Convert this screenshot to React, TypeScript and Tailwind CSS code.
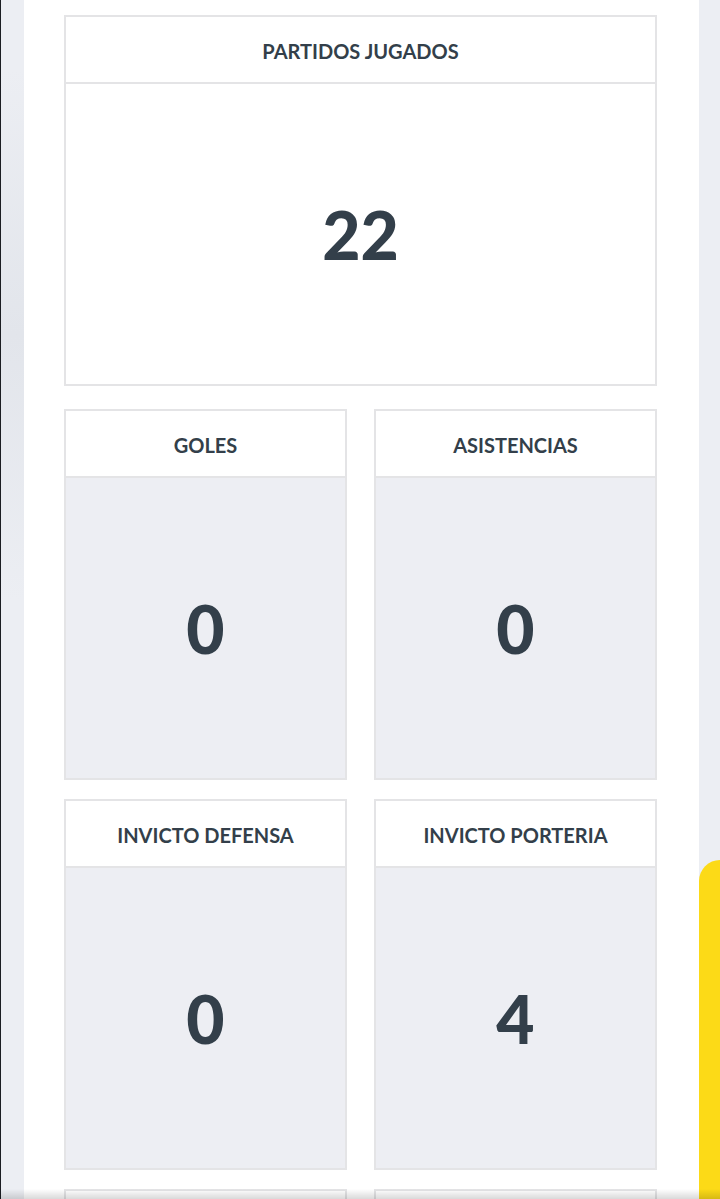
import React from "react";

const font = { fontFamily: "Lato, 'Noto Sans', sans-serif" };

function Card({ title, value, big = false }: { title: string; value: string; big?: boolean }) {
  return (
    <div className="flex h-[371px] flex-col border-2 border-[#e4e4e6]">
      <div className="flex h-[67px] shrink-0 items-center justify-center border-b-2 border-[#e4e4e6] bg-white pt-[2px] text-[20px] font-bold text-[#333f4a]">
        {title}
      </div>
      <div
        className={
          big
            ? "flex flex-1 items-center justify-center bg-white text-[66px] font-black text-[#333f4a]"
            : "flex flex-1 items-center justify-center bg-[#edeef3] text-[66px] font-black text-[#333f4a]"
        }
      >
        {value}
      </div>
    </div>
  );
}

export default function App() {
  return (
    <div className="relative flex h-[1199px] w-[720px] overflow-hidden bg-white" style={font}>
      {/* left strip */}
      <div className="flex w-[24px] shrink-0">
        <div className="w-[1px] bg-[#1b1d22]" />
        <div className="flex flex-1 flex-col bg-[#eceef3]">
          <div className="h-[70px]" />
          <div className="h-[530px] bg-gradient-to-b from-[#eceef3] via-[#e2e5eb] to-[#eceef3]" />
          <div className="flex-1" />
        </div>
      </div>

      {/* main panel */}
      <div className="w-[675px] shrink-0 bg-white pl-[40px] pr-[42px] pt-[15px]">
        <Card title="PARTIDOS JUGADOS" value="22" big />
        <div className="mt-[23px] grid grid-cols-2 gap-x-[27px] gap-y-[19px]">
          <Card title="GOLES" value="0" />
          <Card title="ASISTENCIAS" value="0" />
          <Card title="INVICTO DEFENSA" value="0" />
          <Card title="INVICTO PORTERIA" value="4" />
          <Card title="" value="" />
          <Card title="" value="" />
        </div>
      </div>

      {/* right strip */}
      <div className="flex flex-1 flex-col bg-[#eceef3]">
        <div className="h-[860px]" />
        <div className="flex-1 rounded-tl-[40px] bg-[#fcda17]" />
      </div>

      {/* bottom shadow overlay */}
      <div className="pointer-events-none absolute bottom-0 left-0 h-[10px] w-full bg-gradient-to-b from-transparent to-[#00000026]" />
    </div>
  );
}
